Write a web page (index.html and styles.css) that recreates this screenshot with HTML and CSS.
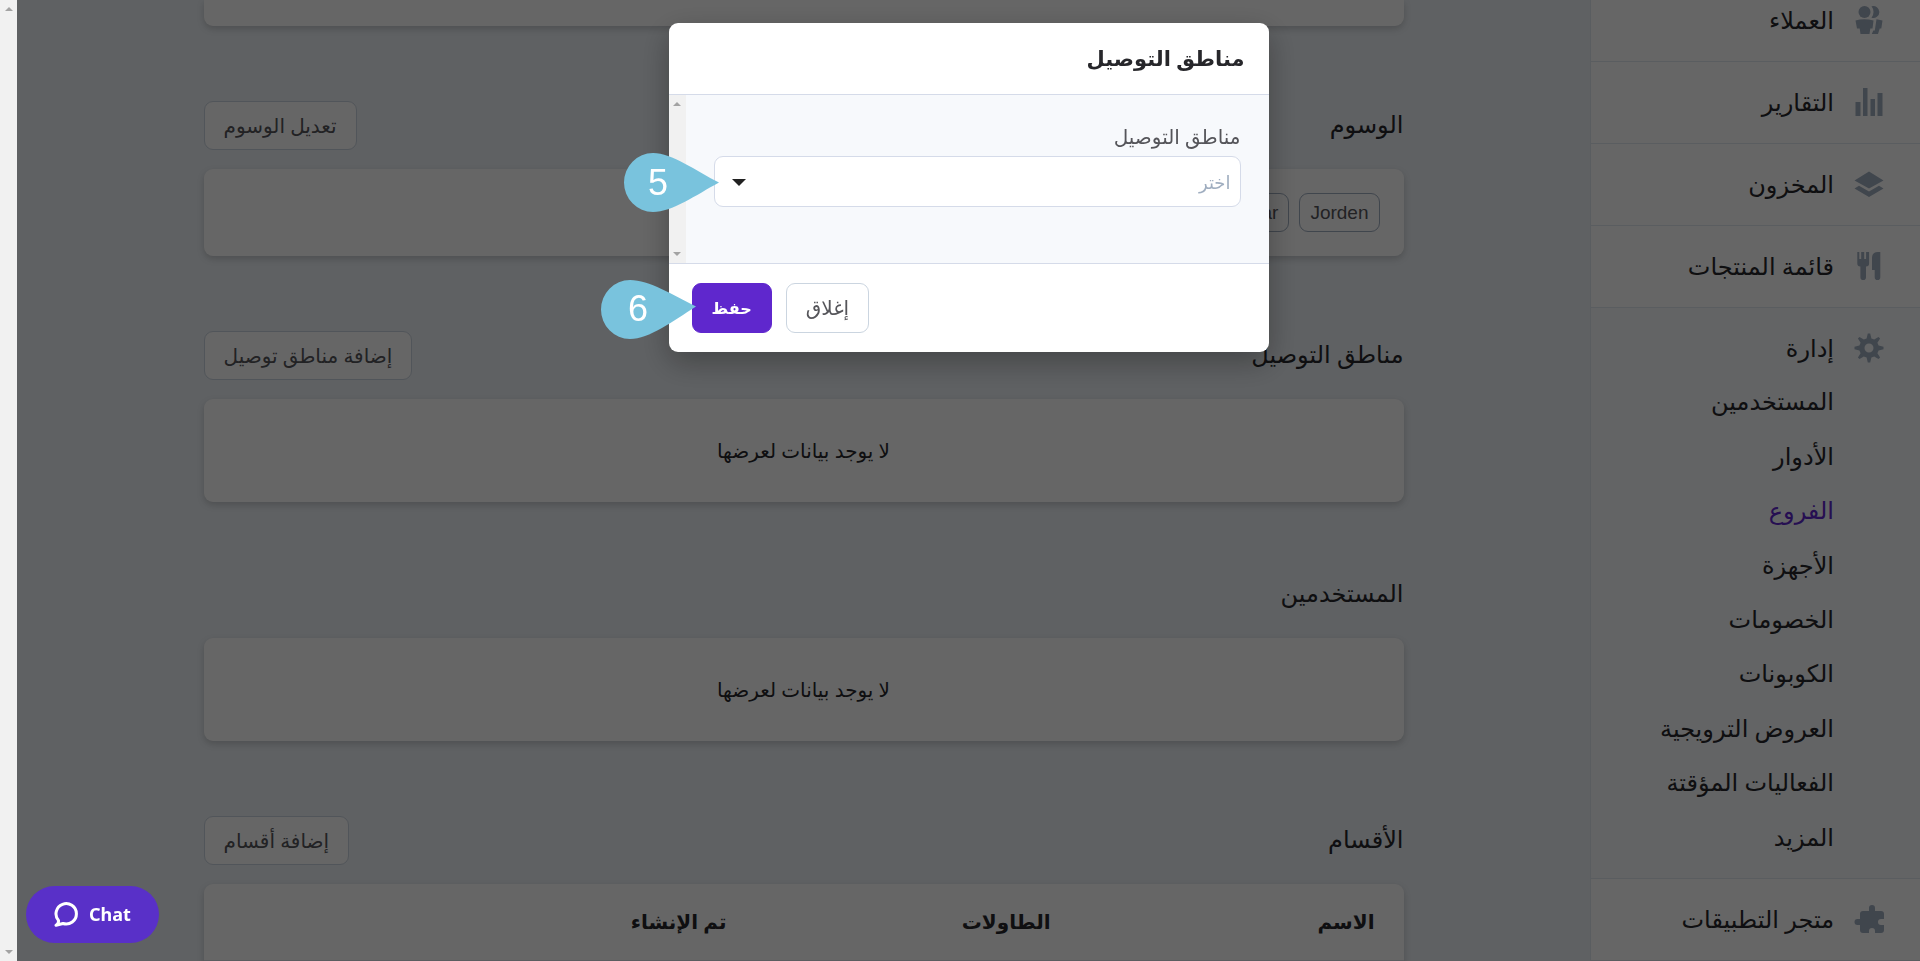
FILE: index.html
```html
<!DOCTYPE html>
<html lang="ar" dir="rtl">
<head>
    <meta charset="UTF-8">
    <meta name="viewport" content="width=device-width, initial-scale=1.0">
    <title>الفروع</title>
    <link rel="stylesheet" href="styles.css">
</head>
<body>
    <div class="layout">
        <nav class="sidebar">
            <a class="nav-item nav-first" href="#">
                <svg class="icon" viewBox="0 0 28 28"><circle cx="9.500" cy="6" r="6"/><path d="M16.500 0.300a6 6 0 1 1 0 11.400 9 9 0 0 0 0-11.400zM.5 14.500Q9 12 18.500 14.500l-1 8h-2.200L14.500 28h-9l-.8-5.500H2zM21.500 13.200l6 1.300-1.200 8h-1.600L23 28h-6.200l1.500-3.500h1.500z"/></svg>
                <span>العملاء</span>
            </a>
            <a class="nav-item" href="#">
                <svg class="icon" viewBox="0 0 28 28"><path d="M.5 14h5v14h-5zM8 0h4.500v28H8zM15.500 11H20v17h-4.500zM22.500 5h5v23h-5z"/></svg>
                <span>التقارير</span>
            </a>
            <a class="nav-item" href="#">
                <svg class="icon" viewBox="0 0 28 28"><path d="M14 1.500L28.500 10.500 14 18.500-.5 10.500zM4 15.800l10 5.700 10-5.700 4.500 2.700L14 27-.5 18.500z"/></svg>
                <span>المخزون</span>
            </a>
            <a class="nav-item" href="#">
                <svg class="icon" viewBox="0 0 28 28"><path d="M2.300 0h2v7h1.900V0h3v7h1.900V0h3v11.500a3 3 0 0 1-3 3h-.1V25.300a2.800 2.800 0 0 1-5.600 0V14.500a3 3 0 0 1-3.100-3zM17 18V6q0-6 6-6h2.300v25.300a2.800 2.800 0 0 1-5.600 0V18z"/></svg>
                <span>قائمة المنتجات</span>
            </a>
            <div class="nav-group">
                <a class="nav-item" href="#">
                    <svg class="icon" viewBox="0 0 28 28"><path fill-rule="evenodd" d="M12.800-.5h2.400l1.200 4.900 2.800 1.200 4.300-2.700 1.600 1.600-2.700 4.300 1.200 2.800 4.900 1.200v2.400l-4.900 1.200-1.200 2.800 2.700 4.300-1.600 1.600-4.300-2.700-2.800 1.200-1.200 4.900h-2.400l-1.200-4.900-2.800-1.200-4.300 2.700-1.600-1.600 2.700-4.300-1.200-2.800-4.900-1.200v-2.400l4.900-1.200 1.200-2.800-2.700-4.300 1.600-1.600 4.300 2.700 2.800-1.200zM14 9.500a4.500 4.500 0 1 0 0 9 4.500 4.500 0 0 0 0-9z"/></svg>
                    <span>إدارة</span>
                </a>
                <div class="sub-nav">
                    <a href="#">المستخدمين</a>
                    <a href="#">الأدوار</a>
                    <a class="current" href="#">الفروع</a>
                    <a href="#">الأجهزة</a>
                    <a href="#">الخصومات</a>
                    <a href="#">الكوبونات</a>
                    <a href="#">العروض الترويجية</a>
                    <a href="#">الفعاليات المؤقتة</a>
                    <a href="#">المزيد</a>
                </div>
            </div>
            <a class="nav-item" href="#">
                <svg class="icon" viewBox="0 0 28 28"><path d="M5 9q0-3 3-3h6V3a3 3 0 0 1 6 0v3h6q3 0 3 3v5h-3a3 3 0 0 0 0 6h3v5q0 3-3 3h-6v-2a3 3 0 0 0-6 0v2H8q-3 0-3-3v-5H2.500a3 3 0 0 1 0-6H5z"/></svg>
                <span>متجر التطبيقات</span>
            </a>
        </nav>

        <main class="content">
            <div class="card card-top"></div>

            <section>
                <header class="section-header">
                    <h2>الوسوم</h2>
                    <button class="btn" type="button">تعديل الوسوم</button>
                </header>
                <div class="card tags">
                    <span class="tag">Jorden</span>
                    <span class="tag">Qatar</span>
                </div>
            </section>

            <section>
                <header class="section-header">
                    <h2>مناطق التوصيل</h2>
                    <button class="btn" type="button">إضافة مناطق توصيل</button>
                </header>
                <div class="card empty">لا يوجد بيانات لعرضها</div>
            </section>

            <section>
                <header class="section-header">
                    <h2>المستخدمين</h2>
                </header>
                <div class="card empty">لا يوجد بيانات لعرضها</div>
            </section>

            <section>
                <header class="section-header">
                    <h2>الأقسام</h2>
                    <button class="btn" type="button">إضافة أقسام</button>
                </header>
                <div class="card">
                    <table class="table">
                        <thead>
                            <tr><th>الاسم</th><th>الطاولات</th><th>تم الإنشاء</th></tr>
                        </thead>
                        <tbody>
                            <tr><td></td><td></td><td></td></tr>
                        </tbody>
                    </table>
                </div>
            </section>
        </main>

        <div class="scrollbar"><i class="up"></i><i class="down"></i></div>
    </div>

    <div class="overlay">
        <div class="modal" role="dialog" aria-labelledby="modal-title">
            <header class="modal-header">
                <h3 id="modal-title">مناطق التوصيل</h3>
            </header>
            <div class="modal-body">
                <div class="field">
                    <label for="zones">مناطق التوصيل</label>
                    <div class="select-wrap">
                        <select id="zones"><option>اختر</option></select>
                    </div>
                </div>
                <div class="scrollbar"><i class="up"></i><i class="down"></i></div>
            </div>
            <footer class="modal-footer">
                <button class="btn" type="button">إغلاق</button>
                <button class="btn btn-primary" type="button">حفظ</button>
            </footer>
            <svg class="marker marker-select" viewBox="0 0 95 59"><path d="M29 0C48 0 72 18 95 29.500C72 42 48 59 29 59A29 29.500 0 0 1 29 0z"/><text x="34" y="42">5</text></svg>
            <svg class="marker marker-save" viewBox="0 0 95 59"><path d="M29 0C48 0 72 15 95 26.500C72 41 48 59 29 59A29 29.500 0 0 1 29 0z"/><text x="37" y="41">6</text></svg>
        </div>
    </div>

    <button class="chat" type="button" dir="ltr">
        <svg viewBox="0 0 24 25"><path d="M4.500 18.500A10.200 10.200 0 1 1 9 21.500L2 23.300q2.800-1.500 2.500-4.800z"/></svg>
        Chat
    </button>
</body>
</html>
```
FILE: styles.css
```css
* {
    box-sizing: border-box;
}

body {
    margin: 0;
    height: 100vh;
    overflow: hidden;
    background: #edf2f7;
    color: #27272b;
    font-family: "Noto Sans", "DejaVu Sans", sans-serif;
    font-size: 20px;
}

h2, h3 {
    margin: 0;
}

a {
    color: inherit;
    text-decoration: none;
}

button, select {
    font-family: inherit;
    font-size: 20px;
}

.layout {
    display: flex;
    height: 100vh;
    overflow: hidden;
}

/* sidebar */
.sidebar {
    width: 330px;
    flex-shrink: 0;
    background: #fff;
    border-left: 1px solid #e2e8f0;
    font-size: 24px;
    line-height: 34px;
}

.nav-item {
    display: flex;
    align-items: center;
    gap: 21px;
    padding: 23px 37px 24px;
    border-bottom: 1px solid #e2e8f0;
}

.nav-first {
    padding-top: 3px;
}

.icon {
    width: 28px;
    height: 28px;
    fill: #a0aec0;
    overflow: visible;
}

.nav-group {
    background: #f7fafc;
    border-bottom: 1px solid #e2e8f0;
    padding-bottom: 14px;
}

.nav-group .nav-item {
    border: 0;
    padding-bottom: 9px;
}

.sub-nav {
    display: grid;
    grid-auto-rows: 1fr;
    align-items: center;
    min-height: 490px;
    padding-right: 86px;
}

.sub-nav .current {
    color: #5f27cd;
}

/* content */
.content {
    flex: 1;
    display: flex;
    flex-direction: column;
    gap: 75px;
    padding: 0 24px;
}

.content > * {
    width: 100%;
    max-width: 1200px;
    margin: 0 auto;
    flex-shrink: 0;
}

.section-header {
    display: flex;
    align-items: flex-end;
    justify-content: space-between;
    margin-bottom: 19px;
}

.section-header h2 {
    margin-bottom: 10px;
    font-size: 24px;
    line-height: 32px;
    font-weight: 400;
}

.card {
    background: #fff;
    border-radius: 9px;
    box-shadow: 0 3px 7px rgba(0, 0, 0, 0.18);
}

.card-top {
    height: 26px;
    border-radius: 0 0 9px 9px;
}

.tags {
    display: flex;
    gap: 10px;
    padding: 24px;
}

.tag {
    padding: 0 10px;
    border: 1px solid #a0aec0;
    border-radius: 9px;
    color: #55555a;
    font-family: "Liberation Sans", sans-serif;
    font-size: 19px;
    line-height: 37px;
}

.empty {
    padding: 36px;
    line-height: 31px;
    text-align: center;
}

.table {
    width: 100%;
    table-layout: fixed;
    border-collapse: collapse;
}

.table th {
    padding: 20px 29px;
    font-size: 20px;
    line-height: 36px;
    text-align: start;
}

.table th:not(:last-child) {
    width: 27%;
}

.table td {
    height: 76px;
    border-top: 1px solid #e2e8f0;
}

.btn {
    padding: 0 19px;
    border: 1px solid #cbd5e0;
    border-radius: 9px;
    background: #fff;
    color: #55555a;
    line-height: 47px;
    cursor: pointer;
}

.btn-primary {
    border-color: #5f27cd;
    background: #5f27cd;
    color: #fff;
    font-size: 16px;
    font-weight: 600;
}

.scrollbar {
    width: 17px;
    flex-shrink: 0;
    display: flex;
    flex-direction: column;
    align-items: center;
    justify-content: space-between;
    padding: 7px 0;
    background: #f1f1f1;
}

.scrollbar i {
    border: 4px solid transparent;
}

.scrollbar .up {
    border-top: 0;
    border-bottom-color: #a3a3a3;
}

.scrollbar .down {
    border-bottom: 0;
    border-top-color: #a3a3a3;
}

/* modal */
.overlay {
    position: fixed;
    inset: 0 0 0 17px;
    padding-top: 23px;
    background: rgba(0, 0, 0, 0.6);
}

.modal {
    position: relative;
    width: 600px;
    margin: 0 auto;
    border-radius: 9px;
    background: #fff;
    box-shadow: 0 10px 30px rgba(0, 0, 0, 0.3);
}

.modal-header {
    padding: 17px 24px 18px;
    border-bottom: 1px solid #d5dbe9;
}

.modal-header h3 {
    font-size: 21px;
    line-height: 36px;
}

.modal-body {
    display: flex;
    background: #f7f9fc;
}

.field {
    flex: 1;
    padding: 26px 28px 56px;
}

.field label {
    display: block;
    margin-bottom: 3px;
    color: #55555a;
    line-height: 32px;
}

.select-wrap {
    position: relative;
}

.select-wrap::after {
    content: "";
    position: absolute;
    left: 18px;
    top: 23px;
    border: 7px solid transparent;
    border-top-color: #212121;
    border-bottom: 0;
    pointer-events: none;
}

.select-wrap select {
    width: 100%;
    height: 51px;
    padding: 0 9px;
    border: 1px solid #d5dbe9;
    border-radius: 9px;
    background: #fff;
    color: #a0aec0;
    font-size: 18px;
    appearance: none;
}

.modal-footer {
    display: flex;
    justify-content: flex-end;
    gap: 14px;
    padding: 19px 23px;
    border-top: 1px solid #d5dbe9;
}

.modal-footer .btn {
    line-height: 48px;
}

/* numbered markers */
.marker {
    position: absolute;
    width: 95px;
    height: 59px;
    fill: #79c3dd;
}

.marker text {
    fill: #fff;
    font: 36px "Liberation Sans", sans-serif;
    text-anchor: middle;
}

.marker-select {
    left: -45px;
    top: 130px;
}

.marker-save {
    left: -68px;
    top: 257px;
}

.chat {
    position: fixed;
    left: 26px;
    bottom: 18px;
    display: flex;
    align-items: center;
    gap: 11px;
    padding: 0 28px;
    border: 0;
    border-radius: 29px;
    background: #5930c8;
    color: #fff;
    font-family: "Noto Sans", sans-serif;
    font-size: 18px;
    font-weight: 700;
    line-height: 57px;
    cursor: pointer;
}

.chat svg {
    width: 24px;
    height: 25px;
    fill: none;
    stroke: #fff;
    stroke-width: 3;
    stroke-linejoin: round;
}
```
